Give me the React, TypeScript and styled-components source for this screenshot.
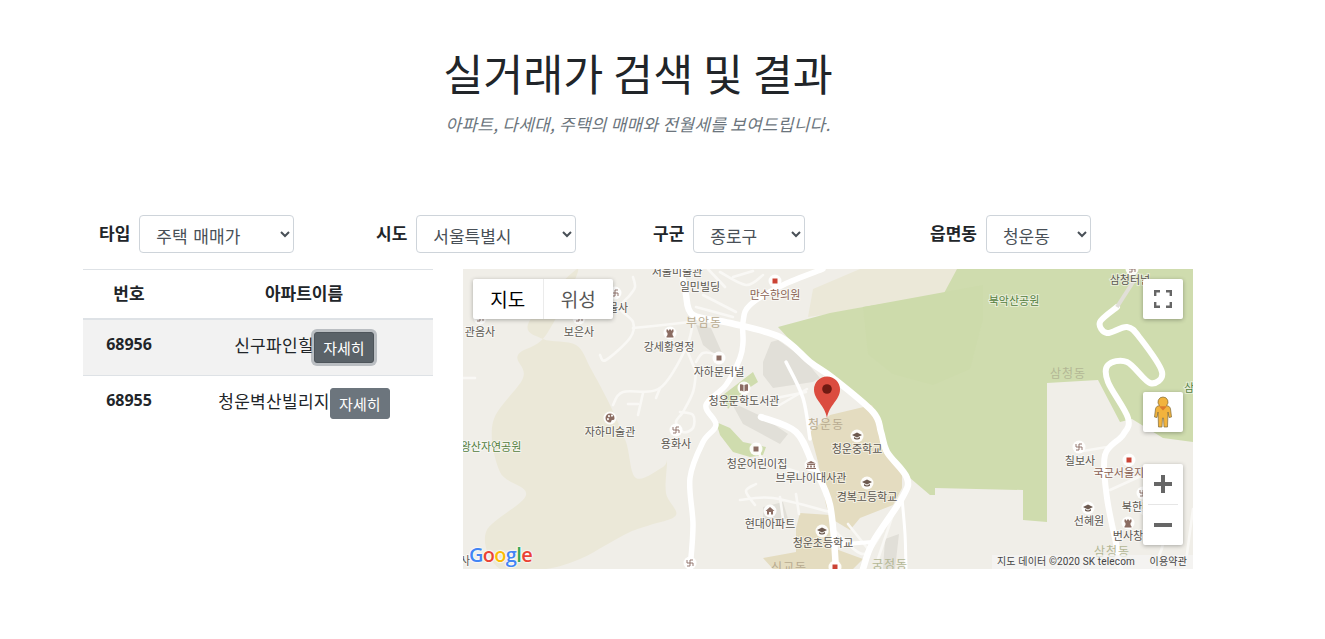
import React from 'react';
import styled, { createGlobalStyle } from 'styled-components';

const KR = `"Noto Sans CJK KR", "Noto Sans", sans-serif`;

const Global = createGlobalStyle`
  html, body { margin: 0; padding: 0; background: #fff; }
  body { font-family: ${KR}; font-size: 17px; line-height: 1.5; color: #212529; }
`;

const Page = styled.div`
  width: 1110px;
  margin-left: 83px;
  height: 639px;
  overflow: hidden;
`;
const Header = styled.header`
  height: 215px;
  padding-top: 44px;
  box-sizing: border-box;
  text-align: center;
`;
const Title = styled.h1`
  margin: 0;
  font-size: 43.5px;
  font-weight: 400;
  line-height: 58px;
`;
const Lead = styled.p`
  margin: 10px 0 0;
  font-size: 17px;
  line-height: 24px;
  font-style: italic;
  letter-spacing: 0.25px;
  color: #6c757d;
`;
const Filters = styled.form`
  display: grid;
  grid-template-columns: repeat(4, 277px);
  padding-left: 16px;
  margin: 0 0 16px;
  height: 38px;
`;
const Field = styled.div`
  display: flex;
  align-items: center;
  gap: 9px;
`;
const FieldLabel = styled.label`
  font-weight: 700;
  font-size: 17px;
  line-height: 24px;
  margin-top: -2px;
`;
const Select = styled.select<{ $w: number }>`
  width: ${p => p.$w}px;
  height: 38px;
  box-sizing: border-box;
  padding: 6px 12px;
  border: 1px solid #ced4da;
  border-radius: 4px;
  background: #fff;
  color: #495057;
  font-family: ${KR};
  font-size: 17px;
  word-spacing: 2px;
`;
const Content = styled.div`
  display: flex;
  gap: 30px;
  align-items: flex-start;
`;
const Table = styled.table`
  width: 350px;
  flex: none;
  border-collapse: collapse;
  table-layout: fixed;
  text-align: center;
`;
const HeadCell = styled.th<{ $w?: number }>`
  width: ${p => (p.$w ? `${p.$w}px` : 'auto')};
  height: 49px;
  padding: 0 0 2px;
  box-sizing: border-box;
  border-top: 1px solid #dee2e6;
  border-bottom: 2px solid #dee2e6;
  font-size: 17px;
  font-weight: 700;
`;
const Row = styled.tr<{ $hover?: boolean; $last?: boolean }>`
  background: ${p => (p.$hover ? '#f2f2f2' : 'transparent')};
  border-bottom: ${p => (p.$last ? 'none' : '1px solid #dee2e6')};
`;
const NumCell = styled.th`
  vertical-align: top;
  padding: 12px 0;
  height: 55px;
  box-sizing: border-box;
  font-family: "Open Sans", "Noto Sans", sans-serif;
  font-size: 16px;
  line-height: 24px;
  font-weight: 700;
`;
const NameCell = styled.td`
  vertical-align: top;
  padding: 12px 0;
  font-size: 17px;
  line-height: 24px;
  letter-spacing: 0.3px;
  white-space: nowrap;
`;
const Detail = styled.button<{ $focus?: boolean }>`
  display: inline-block;
  width: 60px;
  height: 31px;
  padding: 0;
  border: 1px solid ${p => (p.$focus ? '#4e555b' : '#6c757d')};
  border-radius: 3px;
  background: ${p => (p.$focus ? '#5a6268' : '#6c757d')};
  box-shadow: ${p => (p.$focus ? '0 0 0 3px rgba(130,138,145,.5)' : 'none')};
  color: #fff;
  font-family: ${KR};
  font-size: 15px;
  line-height: 21px;
  letter-spacing: 0;
  vertical-align: middle;
`;
const MapBox = styled.div`
  position: relative;
  width: 730px;
  height: 300px;
  overflow: hidden;
  background: #f0eee8;
  flex: none;
`;
const MapDrawing = styled.svg`
  display: block;
`;
const ControlSurface = styled.div`
  position: absolute;
  background: #fff;
  border-radius: 2px;
  box-shadow: 0 1px 4px rgba(0,0,0,.3);
`;
const TypeControl = styled(ControlSurface)`
  left: 10px;
  top: 10px;
  width: 140px;
  height: 40px;
  display: flex;
`;
const TypeTab = styled.div<{ $on?: boolean }>`
  width: 70px;
  height: 40px;
  display: flex;
  align-items: center;
  justify-content: center;
  font-size: 19px;
  color: ${p => (p.$on ? '#000' : '#565656')};
  & + & { border-left: 1px solid #ebebeb; }
`;
const SquareControl = styled(ControlSurface)<{ $top: number }>`
  right: 10px;
  top: ${p => p.$top}px;
  width: 40px;
  height: 40px;
  display: flex;
  align-items: center;
  justify-content: center;
`;
const ZoomControl = styled(ControlSurface)`
  right: 10px;
  top: 195px;
  width: 40px;
  height: 81px;
  display: flex;
  flex-direction: column;
  align-items: center;
`;
const ZoomBtn = styled.div`
  width: 40px;
  height: 40px;
  display: flex;
  align-items: center;
  justify-content: center;
`;
const ZoomRule = styled.div`
  width: 30px;
  height: 1px;
  background: #e6e6e6;
`;
const Attribution = styled.div`
  position: absolute;
  right: 0;
  bottom: 0;
  height: 14px;
  width: 201px;
  padding: 0 6px 0 5px;
  box-sizing: border-box;
  display: flex;
  justify-content: space-between;
  background: rgba(245,245,245,.7);
  font-family: Roboto, ${KR};
  font-size: 10px;
  line-height: 14px;
  letter-spacing: 0.15px;
  color: #444;
  white-space: nowrap;
`;
const GoogleMark = styled.div`
  position: absolute;
  left: 6px;
  bottom: 1px;
  height: 26px;
  font-family: "Open Sans", Roboto, sans-serif;
  font-size: 20px;
  line-height: 26px;
  font-weight: 600;
  letter-spacing: -0.7px;
  text-shadow: 0 0 2px #fff, 0 0 2px #fff, 0 0 2px #fff;
`;
const Letter = styled.span<{ $c: string }>`
  color: ${p => p.$c};
`;

type L = [string, number, number, string?];
const DARK = '#5b5650';
const PALE = '#b8ab90';
const OLIVE = '#b3b795';
const GREEN = '#55803f';
const BROWN = '#8a5f52';

const labels: L[] = [
  ['서울미술관', 214, 7], ['일민빌딩', 237, 22], ['만수한의원', 312, 30, BROWN], ['강세황영정', 206, 82],
  ['관음사', 17, 67], ['보은사', 116, 67], ['석물사', 150, 43], ['자하문터널', 256, 107],
  ['청운문학도서관', 281, 136], ['자하미술관', 147, 167], ['용화사', 213, 179], ['청운어린이집', 294, 199],
  ['브루나이대사관', 348, 213], ['현대아파트', 307, 259], ['청운초등학교', 360, 278], ['경복고등학교', 404, 232],
  ['청운중학교', 394, 184], ['사', 2, 296], ['삼청터널', 667, 15], ['칠보사', 617, 196],
  ['국군서울지구병원', 671, 208, BROWN], ['선혜원', 626, 256], ['북한미', 674, 242], ['번사창', 665, 271],
  ['북악산공원', 551, 36, GREEN], ['왕산자연공원', 28, 182, GREEN], ['삼', 726, 123, GREEN],
];
const paleLabels: L[] = [
  ['부암동', 241, 58, PALE], ['청운동', 363, 160, PALE], ['신교동', 326, 303, PALE], ['궁정동', 427, 300, OLIVE],
  ['삼청동', 605, 109, OLIVE], ['삼청동', 649, 287, OLIVE],
];
const minor: string[] = [
  '137,86 143,91 167,69 170,53 157,39 167,26 172,18 170,8',
  '170,59 200,56 227,53',
  '230,53 223,79 197,119 160,123 150,136',
  '180,124 175,146', '197,119 193,129', '175,135 165,135',
  '233,103 230,123 220,143 213,153 220,163 230,159 230,146 217,143',
  '233,93 240,84 253,86 258,92',
  '223,79 233,103',
  '257,3 283,16 300,6', '240,26 273,43', '233,38 270,48', '245,0 262,18', '270,8 290,2',
  '0,109 12,109',
  '277,231 310,229 367,243', '293,215 283,222 292,236', '317,228 320,250', '333,225 336,245',
  '313,129 343,123', '315,137 344,120', '296,175 300,190 335,203',
  '614,183 644,178', '647,221 680,206', '722,300 730,240', '667,235 700,265 690,300',
  '372,262 400,285 420,262', '385,255 405,280', '430,245 415,290',
];
const hill = '115,0 66,53 80,70 113,76 128,100 147,136 163,173 173,209 200,198 204,192 203,224 213,246 187,256 167,263 143,276 117,290 83,300 37,300 23,263 63,226 37,203 30,153 60,109 55,86 83,66';
const pois: [number, number, string][] = [
  [312, 12, 'red'], [207, 64, 'rook'], [256, 89, 'sq'], [281, 119, 'book'], [147, 149, 'art'],
  [213, 161, 'tmp'], [293, 180, 'sq'], [348, 196, 'bank'], [307, 242, 'home'], [359, 262, 'grad'],
  [227, 294, 'tmp'], [152, 24, 'tmp'], [116, 49, 'tmp'], [17, 49, 'tmp'], [394, 167, 'grad'], [404, 214, 'grad'],
  [616, 178, 'tmp'], [666, 191, 'red'], [625, 239, 'grad'], [665, 254, 'rook'], [669, 0, 'tmp'], [680, 224, 'tmp'], [372, 298, 'red'],
];

function smooth(points: string, closed = false): string {
  const p = points.trim().split(/\s+/).map(s => s.split(',').map(Number));
  const n = p.length;
  if (n < 3) return `M${p.map(q => q.join(' ')).join('L')}`;
  const at = (i: number) => (closed ? p[(i + n) % n] : p[Math.max(0, Math.min(n - 1, i))]);
  let d = `M${p[0][0]} ${p[0][1]}`;
  const segs = closed ? n : n - 1;
  for (let i = 0; i < segs; i++) {
    const [a, b, c, e] = [at(i - 1), at(i), at(i + 1), at(i + 2)];
    const c1 = [b[0] + (c[0] - a[0]) / 6, b[1] + (c[1] - a[1]) / 6];
    const c2 = [c[0] - (e[0] - b[0]) / 6, c[1] - (e[1] - b[1]) / 6];
    d += `C${c1[0].toFixed(1)} ${c1[1].toFixed(1)} ${c2[0].toFixed(1)} ${c2[1].toFixed(1)} ${c[0]} ${c[1]}`;
  }
  return closed ? `${d}z` : d;
}

function Poi({ x, y, kind }: { x: number; y: number; kind: string }) {
  const c = '#8b6c62';
  return (
    <g transform={`translate(${x} ${y})`}>
      <circle r="6.5" fill="#fff" fillOpacity="0.9" />
      {kind === 'red' && <rect x="-2.5" y="-2.5" width="5" height="5" fill="#cb4335" />}
      {kind === 'sq' && <rect x="-2.5" y="-2.5" width="5" height="5" fill={c} />}
      {kind === 'rook' && <path d="M-3.5-3.5h1.5v1h1v-1h2v1h1v-1h1.5v2.5l-1 1v2l1 1.5v1h-7v-1l1-1.5v-2l-1-1z" fill={c} />}
      {kind === 'book' && <path d="M-.5-3 C-2-4-3.5-4-4-3.5V3C-3 2.5-1.5 2.5-.5 3.5zM.5-3C2-4 3.5-4 4-3.5V3C3 2.5 1.5 2.5 .5 3.5z" fill={c} />}
      {kind === 'art' && <path d="M0-4.5a4.5 4.5 0 1 0 0 9c1.5 0 1-1.5 1.5-2 1-1 3 .5 3-2.5A4.5 4.5 0 0 0 0-4.5zM-2-2a1 1 0 1 1 0 .1zM1-2.5a1 1 0 1 1 0 .1zM-3 1a1 1 0 1 1 0 .1z" fill={c} fillRule="evenodd" />}
      {kind === 'tmp' && <path d="M-3-3v3h6v3M3-3H0v6h-3" fill="none" stroke={c} strokeWidth="0.9" />}
      {kind === 'bank' && <path d="M0-4L5-1.5H-5zM-4-1h8v1h-8zM-4 .5h1.5v2h-1.5zM-.8.5H.8v2H-.8zM2.5.5H4v2H2.5zM-5 3h10v1H-5z" fill={c} />}
      {kind === 'home' && <path d="M0-4L4.5 0H3V3.5H1V1H-1V3.5H-3V0H-4.5z" fill={c} />}
      {kind === 'grad' && <path d="M0-3.5L5-1 0 1.5-5-1zM-3 1v1.5C-2 3.800 2 3.800 3 2.500V1L0 2.500z" fill="#6d5a50" />}
    </g>
  );
}

const mainRoads: [string, number][] = [
  ['223,26 230,46 267,54 317,68 347,93 370,109 410,143 418,163 424,183 444,209 439,229 410,273 400,300', 6.5],
  ['410,273 367,276', 4],
  ['439,229 442,265 443,300', 3],
  ['360,0 320,16 287,36 280,53 280,73 277,89 263,116 243,136 253,156 240,173 227,209 230,256 227,300', 5.5],
  ['218,0 223,26', 6],
  ['298,148 333,163 350,196 367,236 373,300', 6.5],
  ['323,93 340,129 347,170', 3.5],
  ['654,38 637,53 644,64 664,58 677,69 699,103 687,114 664,93 645,96 645,113 665,149 660,166 642,186 644,229 654,279 657,300', 6],
];

function MapArt() {
  return (
    <MapDrawing width="730" height="300" viewBox="0 0 730 300">
      <rect width="730" height="300" fill="#f0eee8" />
      <path d={smooth(hill, true)} fill="#ebe8d8" />
      <path d="M397 0H496L480 26 450 32 400 38 367 45 345 48 350 20z" fill="#ebe8d8" />
      <path d="M494 0L480 26 400 38 367 44 315 58 347 93 370 109 410 143 418 163 424 183 447 209 467 226 472 226 472 219 560 221 560 251 584 253 584 114 635 111 657 153 669 150 700 169 730 173V0z" fill="#cfdcae" />
      <path d="M400 38L520 16 520 50 507 100 470 116 430 105 405 85z" fill="#cddbab" />
      <path d="M260 126L290 103 295 113 280 123 265 140z" fill="#cfdcae" />
      <path d="M253 153L267 159 280 173 303 178 300 186 287 188 270 183 257 166z" fill="#cfdcae" />
      <path d="M347 163L367 146 409 136 417 153 422 173 439 206 439 219 430 236 397 249 387 261 367 249 363 236 355 193z" fill="#e4dcc0" />
      <path d="M337 244L367 246 370 279 400 290 390 300H310L300 289 333 283 333 259z" fill="#e4dcc0" />
      <path d="M233 56L248 59 260 86 250 84 240 76z" fill="#e1dfd8" />
      <path d="M300 93L308 73 315 71 340 89 357 109 350 113 310 119 300 106z" fill="#e1dfd8" />
      <path d="M300 238L320 233 325 250 300 250z" fill="#e1dfd8" />
      <path d="M268 133L300 148 325 165 317 175 280 155z" fill="#e1dfd8" />
      <path d="M422 270L436 265 432 300 420 300z" fill="#e1dfd8" />
      {minor.map(p => (
        <path key={p} d={smooth(p)} fill="none" stroke="#f9f8f5" strokeWidth="2.6" strokeLinecap="round" strokeLinejoin="round" />
      ))}
      <g fill="none" stroke="#fff" strokeLinecap="round" strokeLinejoin="round">
        {mainRoads.map(([p, w]) => <path key={p} d={smooth(p)} strokeWidth={w} />)}
      </g>
      <polyline points="654,38 672,10" fill="none" stroke="#e1dfd8" strokeWidth="4" />
      {pois.map(([x, y, k]) => <Poi key={`${x}-${y}`} x={x} y={y} kind={k} />)}
      <g fontFamily={KR} fontSize="11" textAnchor="middle" stroke="#fff" strokeOpacity="0.55" strokeWidth="2" paintOrder="stroke">
        {labels.map(([t, x, y, c]) => <text key={t} x={x} y={y} fill={c || DARK}>{t}</text>)}
      </g>
      <g fontFamily={KR} fontSize="12" textAnchor="middle" letterSpacing="1">
        {paleLabels.map(([t, x, y, c]) => <text key={`${t}${x}`} x={x} y={y} fill={c}>{t}</text>)}
      </g>
      <path d="M364 149C362 136 351 131 351 120.500A13 13 0 0 1 377 120.500C377 131 366 136 364 149z" fill="#db4c3f" />
      <circle cx="364" cy="120" r="4.800" fill="#6f1a12" />
    </MapDrawing>
  );
}

const rows = [
  { no: '68956', name: '신구파인힐', hover: true },
  { no: '68955', name: '청운벽산빌리지', hover: false },
];

export default function App() {
  return (
    <Page>
      <Global />
      <Header>
        <Title>실거래가 검색 및 결과</Title>
        <Lead>아파트, 다세대, 주택의 매매와 전월세를 보여드립니다.</Lead>
      </Header>
      <Filters>
        <Field><FieldLabel>타입</FieldLabel><Select $w={155} defaultValue="a"><option value="a">주택 매매가</option></Select></Field>
        <Field><FieldLabel>시도</FieldLabel><Select $w={160} defaultValue="a"><option value="a">서울특별시</option></Select></Field>
        <Field><FieldLabel>구군</FieldLabel><Select $w={112} defaultValue="a"><option value="a">종로구</option></Select></Field>
        <Field><FieldLabel>읍면동</FieldLabel><Select $w={105} defaultValue="a"><option value="a">청운동</option></Select></Field>
      </Filters>
      <Content>
        <Table>
          <thead>
            <tr>
              <HeadCell $w={92}>번호</HeadCell>
              <HeadCell>아파트이름</HeadCell>
            </tr>
          </thead>
          <tbody>
            {rows.map((r, i) => (
              <Row key={r.no} $hover={r.hover} $last={i === rows.length - 1}>
                <NumCell>{r.no}</NumCell>
                <NameCell>{r.name}<Detail type="button" $focus={r.hover}>자세히</Detail></NameCell>
              </Row>
            ))}
          </tbody>
        </Table>
        <MapBox>
          <MapArt />
          <TypeControl>
            <TypeTab $on>지도</TypeTab>
            <TypeTab>위성</TypeTab>
          </TypeControl>
          <SquareControl $top={10}>
            <svg width="18" height="18" viewBox="0 0 18 18" fill="none" stroke="#666" strokeWidth="2.400">
              <path d="M1.200 6V1.200H6M12 1.200H16.800V6M16.800 12V16.800H12M6 16.800H1.200V12" />
            </svg>
          </SquareControl>
          <SquareControl $top={123}>
            <svg width="18" height="32" viewBox="0 0 18 32">
              <path d="M9 1a5 5 0 0 1 3.500 8.600C15 10 16 11 16.500 13L17.500 21 15 21.500 14 16 13.500 31H10L9.500 22H8.500L8 31H4.500L4 16 3 21.500.5 21 1.500 13C2 11 3 10 5.500 9.600A5 5 0 0 1 9 1z" fill="#f2b33d" stroke="#7d6a3c" strokeWidth="0.700" />
              <path d="M5 10.200L9 14.500 13 10.200" fill="#dd7a2b" />
            </svg>
          </SquareControl>
          <ZoomControl>
            <ZoomBtn>
              <svg width="18" height="18" viewBox="0 0 18 18"><path d="M0 7h7V0h4v7h7v4h-7v7H7v-7H0z" fill="#666" /></svg>
            </ZoomBtn>
            <ZoomRule />
            <ZoomBtn>
              <svg width="18" height="18" viewBox="0 0 18 18"><path d="M0 7h18v4H0z" fill="#666" /></svg>
            </ZoomBtn>
          </ZoomControl>
          <GoogleMark>
            <Letter $c="#4285f4">G</Letter><Letter $c="#ea4335">o</Letter><Letter $c="#fbbc05">o</Letter><Letter $c="#4285f4">g</Letter><Letter $c="#34a853">l</Letter><Letter $c="#ea4335">e</Letter>
          </GoogleMark>
          <Attribution>
            <span>지도 데이터 ©2020 SK telecom</span>
            <span>이용약관</span>
          </Attribution>
        </MapBox>
      </Content>
    </Page>
  );
}
